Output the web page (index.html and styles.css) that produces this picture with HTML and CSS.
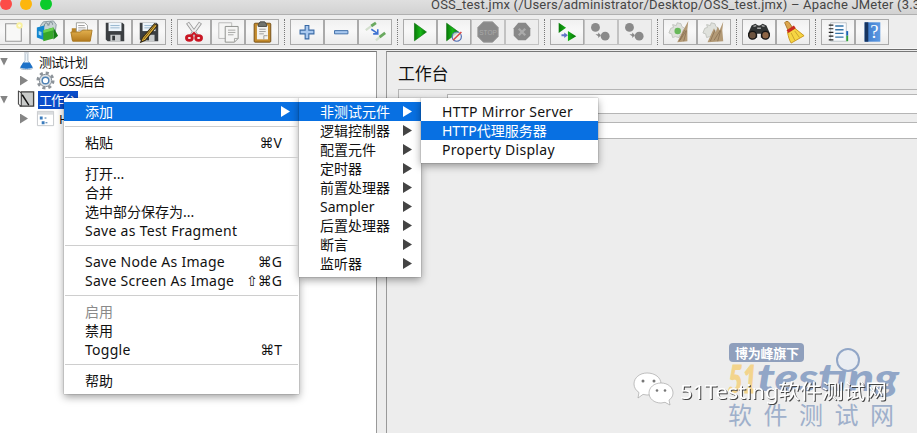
FILE: index.html
```html
<!DOCTYPE html>
<html lang="zh">
<head>
<meta charset="utf-8">
<title>OSS_test.jmx - Apache JMeter</title>
<link rel="stylesheet" href="styles.css">
</head>
<body>
<svg class="defs" width="0" height="0">
  <defs>
    <linearGradient id="green" x2="1"><stop stop-color="#087a08"/><stop offset=".5" stop-color="#18b818"/><stop offset="1" stop-color="#067006"/></linearGradient>
    <linearGradient id="gold" y2="1" x2="0"><stop stop-color="#e2b04e"/><stop offset="1" stop-color="#b57a1c"/></linearGradient>
    <linearGradient id="blue" x2="1"><stop stop-color="#3c78c8"/><stop offset="1" stop-color="#5c9ae4"/></linearGradient>
    <symbol id="floppy" viewBox="0 0 26 26"><path d="M3 3h18l2 2v18H5l-2-2z" fill="#3b3f42"/><path d="M6 3h14v9H6z" fill="#eef5fb"/><path d="M8 6h10M8 8.500h10" stroke="#94b4cc"/><path d="M8 16h11v7H8z" fill="#c9cccd"/><path d="M10 17h3v5h-3z" fill="#34383a"/></symbol>
    <symbol id="broom" viewBox="0 0 26 26"><path d="M3 9l3-1-1-3 4 1 1-3 4 1 1 3 3 2-2 3 1 3-4 1-1 3-4-1-3 1-1-4-3-1z" fill="#dfe1dc" stroke="#c0c2bd"/></symbol>
    <symbol id="nodes" viewBox="0 0 26 26"><circle cx="7" cy="8" r="4.800" fill="#8a8a8a"/><circle cx="17.500" cy="17.500" r="4.800" fill="#8a8a8a"/><path d="M7 15.500h3v-2l3 3-3 3v-2" fill="#888"/></symbol>
  </defs>
</svg>
<div class="window">
  <header class="titlebar">
    <span class="light red"></span><span class="light yellow"></span><span class="light green"></span>
    <span class="title">OSS_test.jmx (/Users/administrator/Desktop/OSS_test.jmx) – Apache JMeter (3.3</span>
  </header>

  <nav class="toolbar">
    <div class="group">
      <button class="tool"><svg viewBox="0 0 26 26"><path d="M5 4h17v19H5z" fill="#f8f8f7" stroke="#999" stroke-width="1.200"/><circle cx="20" cy="6" r="3.500" fill="#f8f0a0"/><circle cx="20" cy="6" r="1.500" fill="#fffde2"/></svg></button>
      <button class="tool"><svg viewBox="0 0 26 26"><path d="M6 6l3-4 11-1 3 4-1 8H8z" fill="#c7d2d4" stroke="#89979e"/><path d="M10 7c0-5 4-5 4-1M15 6c0-5 4-5 4-1" fill="none" stroke="#6c7d86"/><path d="M2 8l8-2v16l-8-3z" fill="#1487cf"/><path d="M4 12l3 1v4l-3-1z" fill="#a5daf3"/><path d="M9 11l11-3v12l-11 3z" fill="#36a729"/><path d="M20 8l5 9-5 4z" fill="#167d16"/><path d="M9 11l11-3v3L9 14z" fill="#6bd24e"/></svg></button>
      <button class="tool"><svg viewBox="0 0 26 26"><path d="M3 9h7l2 2h11v11H3z" fill="#b98428"/><path d="M8 3h9l3 3v11H8z" fill="#fff" stroke="#9a9c98"/><path d="M10 6h7M10 8.500h8M10 11h8" stroke="#999"/><path d="M2 13h10l3-2h10l-2 12H4z" fill="url(#gold)" stroke="#a97924"/></svg></button>
      <button class="tool"><svg><use href="#floppy"/></svg></button>
      <button class="tool"><svg viewBox="0 0 26 26"><use href="#floppy" width="26" height="26"/><path d="M6 19L19 4l3 2L9 22l-5 2z" fill="#e9b637" stroke="#352b17" stroke-width="1.200"/><path d="M7 21L20 5" stroke="#604918"/></svg></button>
    </div>
    <div class="group">
      <button class="tool"><svg viewBox="0 0 26 26"><path d="M6 3l10 14M20 3L10 17" stroke="#999" stroke-width="4"/><path d="M6.500 3.500L16 17M19.500 3.500L10 17" stroke="#eee" stroke-width="2.200"/><ellipse cx="8" cy="19.500" rx="3.200" ry="2.500" fill="none" stroke="#c91724" stroke-width="3"/><ellipse cx="18" cy="19.500" rx="3.200" ry="2.500" fill="none" stroke="#c91724" stroke-width="3"/><path d="M10 17l3-3 3 3" fill="none" stroke="#c91724" stroke-width="2"/></svg></button>
      <button class="tool"><svg viewBox="0 0 26 26"><path d="M3 3h14v17H3z" fill="#f5f5f4" stroke="#b9b9b7"/><path d="M10 7h14v13l-4 4H10z" fill="#f5f5f4" stroke="#8a8b88"/><path d="M24 20h-4v4M13 11h8M13 13.500h8M13 16h6" fill="none" stroke="#a4a5a2"/></svg></button>
      <button class="tool"><svg viewBox="0 0 26 26"><rect x="4.500" y="3.500" width="18" height="20.500" rx="1" fill="#c48b2c" stroke="#704b14"/><path d="M7.500 6h12v15h-12z" fill="#f3f3f1"/><path d="M9 5l2-3h5l2 3v2H9z" fill="#70736e" stroke="#454743"/><path d="M10 10h7M10 12.500h7M10 15h5M19 17h-4v4" fill="none" stroke="#999"/></svg></button>
    </div>
    <div class="group">
      <button class="tool"><svg viewBox="0 0 26 26"><path d="M11 6h4v5h5.500v4H15v5.500h-4V15H5.500v-4H11z" fill="#a8c8ef" stroke="#3869a5" stroke-width="1.200"/></svg></button>
      <button class="tool"><svg viewBox="0 0 26 26"><path d="M6 11.500h14.500V15H6z" fill="#a8c8ef" stroke="#3869a5"/></svg></button>
      <button class="tool"><svg viewBox="0 0 26 26"><path d="M3 11l8-6" stroke="#d3dfcd" stroke-width="2.500"/><path d="M9 6.500l5-3.500" stroke="#6aa95f" stroke-width="3"/><path d="M14 22l7-6" stroke="#d3dfcd" stroke-width="2.500"/><path d="M18 18.500l6-4.500" stroke="#6aa95f" stroke-width="3"/><path d="M9 10l6 4M16 10v5h-5" fill="none" stroke="#3f73d2" stroke-width="1.700"/></svg></button>
    </div>
    <div class="group">
      <button class="tool"><svg viewBox="0 0 26 26"><path d="M7 3.500l13 9.500-13 9.500z" fill="url(#green)" stroke="#0b720b" stroke-width=".7"/></svg></button>
      <button class="tool"><svg viewBox="0 0 26 26"><path d="M5 3.500l13 9.500-13 9.500z" fill="url(#green)" stroke="#0b720b" stroke-width=".7"/><circle cx="16" cy="18" r="5" fill="#eee" fill-opacity=".75" stroke="#5370b5" stroke-width="1.300"/><path d="M12 22l9-9" stroke="#d84b45" stroke-width="1.700"/></svg></button>
      <button class="tool off"><svg viewBox="0 0 26 26"><path d="M8 2h10l6 6v10l-6 6H8l-6-6V8z" fill="#898989" stroke="#999"/><text x="13" y="16" text-anchor="middle" class="stop">STOP</text></svg></button>
      <button class="tool off"><svg viewBox="0 0 26 26"><path d="M9 3h8l5 6v8l-5 5H9l-5-5V9z" fill="#888"/><path d="M9.500 9.500l7 7M16.500 9.500l-7 7" stroke="#aaa" stroke-width="2.500"/></svg></button>
    </div>
    <div class="group">
      <button class="tool"><svg viewBox="0 0 26 26"><path d="M4 3l8 5.500L4 14zM14 12l9 5.500-9 5.500z" fill="url(#green)"/><path d="M7 15.500h3v-2l4 3-4 3v-2H7z" fill="#6174c5"/></svg></button>
      <button class="tool off"><svg><use href="#nodes"/></svg></button>
      <button class="tool off"><svg><use href="#nodes"/></svg></button>
    </div>
    <div class="group">
      <button class="tool"><svg viewBox="0 0 26 26"><use href="#broom" width="26" height="26"/><circle cx="10.500" cy="12" r="3.500" fill="#68b85a"/><path d="M22 1l-1 9v13l-11 1 6-12z" fill="#b39a76"/><path d="M20 11l-7 11M18 11l-6 12M20 12l-3 11" stroke="#80664a" stroke-width=".7"/></svg></button>
      <button class="tool"><svg viewBox="0 0 26 26"><use href="#broom" width="26" height="26"/><path d="M23 2l-1 9 1 12-17 1 5-11 2-4 2 4 2-6 2 4z" fill="#b39a76"/><path d="M20 11l-7 11M14 11l-5 12M20 12l-3 11" stroke="#80664a" stroke-width=".7"/></svg></button>
    </div>
    <div class="group">
      <button class="tool"><svg viewBox="0 0 26 26"><path d="M5 6l4-2 3 2h2l3-2 4 2 4 9-4 6-6-2v-4h-4v4l-6 2-4-6z" fill="#303333"/><circle cx="6" cy="16.500" r="4.200" fill="#6d5440" stroke="#151515" stroke-width="1.500"/><circle cx="20" cy="16.500" r="4.200" fill="#8d6545" stroke="#151515" stroke-width="1.500"/><path d="M7 7l3-1M16 6l3 1M11 9h4" stroke="#aaa" stroke-width="1.500"/></svg></button>
      <button class="tool"><svg viewBox="0 0 26 26"><path d="M4 3c1-2 4-2 5 0l4 6-5 3z" fill="#dca64e" stroke="#a87628"/><path d="M7 13l8-4 10 8-14 8c-2-3-3-7-4-12z" fill="#f6d542" stroke="#c8941c"/><path d="M6 11l8-5 2 3-8 5z" fill="#c92d20"/><path d="M11 14l4 8M15 12l5 7" stroke="#c8a12d"/></svg></button>
    </div>
    <div class="group">
      <button class="tool"><svg viewBox="0 0 26 26"><path d="M5 3h17v20H5z" fill="#fafcff" stroke="#bbc2c7"/><path d="M10 6.500h9M10 10.500h9M10 14.500h9M10 18.500h9" stroke="#3574a9" stroke-width="1.500"/><path d="M3 5.500h5M3 9.500h5M3 13.500h5M3 17.500h5M3 21.500h5" stroke="#222" stroke-width="1.300"/><path d="M22 12h2v5h-2z" fill="#1762b8"/><path d="M22 17h2v6h-2z" fill="#30a238"/></svg></button>
      <button class="tool"><svg viewBox="0 0 26 26"><path d="M5 2.500h17v21H5z" fill="url(#blue)"/><path d="M5 2.500h4v21H5z" fill="#17345f"/><text x="15.500" y="20" text-anchor="middle" class="question">?</text></svg></button>
    </div>
  </nav>

  <main class="content">
    <aside class="tree">
      <div class="node root"><i class="tri down"></i><svg class="ico" viewBox="0 0 18 20"><path d="M7 1h5M8 2v7l-5 8c0 2 13 2 13 0l-5-8V2" fill="#edf4fa" stroke="#a9b7c4"/><path d="M6 11h7l3 5c0 2-13 2-13 0z" fill="#1e72c8"/></svg><span>测试计划</span></div>
      <div class="node child"><i class="tri"></i><svg class="ico" viewBox="0 0 20 20"><circle cx="10" cy="10" r="8" fill="none" stroke="#8d9399" stroke-width="3" stroke-dasharray="3.200 3.080"/><circle cx="10" cy="10" r="6.500" fill="#dce1e5" stroke="#858c93"/><circle cx="10" cy="10" r="3.500" fill="#fff" stroke="#4e82b5" stroke-width="1.500"/></svg><span>OSS后台</span></div>
      <div class="node root"><i class="tri down"></i><svg class="ico" viewBox="0 0 18 20"><path d="M4 2h13v15H3z" fill="#c9cbca" stroke="#3c3c3c" stroke-width="1.400"/><path d="M1 1l3 2v14l-3-2z" fill="#eee" stroke="#333"/><path d="M5 5l7 11" stroke="#111" stroke-width="1.500"/></svg><span class="selected">工作台</span></div>
      <div class="node child"><i class="tri"></i><svg class="ico" viewBox="0 0 20 20"><path d="M1.500 2.500h17v15h-17z" fill="#fff" stroke="#c4c7ca"/><path d="M2 3h16v3H2z" fill="#d9dcdf"/><path d="M4 8h3v3H4zM6 13h3v3H6z" fill="#397bbd"/><path d="M9 9.500h2M10 14.500h2" stroke="#346b9f"/></svg><span>H</span></div>
    </aside>
    <div class="splitter"></div>
    <section class="panel">
      <h1>工作台</h1>
      <div class="form"><div class="field name"></div><div class="field"></div></div>
    </section>
  </main>
</div>

<svg class="watermark" viewBox="0 0 297 103">
  <rect x="109" y="13" width="75" height="19" rx="4" fill="#8f9fbc"/>
  <text x="115" y="28" class="wm-badge" textLength="64">博为峰旗下</text>
  <text x="108" y="63" class="wm-logo gold" textLength="29" lengthAdjust="spacingAndGlyphs">51</text>
  <text x="137" y="61" class="wm-logo steel" textLength="142" lengthAdjust="spacingAndGlyphs">testıng</text>
  <circle cx="228" cy="30" r="11" fill="#eaedf2" stroke="#91a6c7" stroke-width="2"/>
  <text x="108" y="94" class="wm-sub" textLength="166">软件测试网</text>
  <g fill="#fff" stroke="#999" stroke-width=".6">
    <path d="M27 43c8 0 14 4.500 14 11s-6 11-14 11l-4-.6-5 3.600 1-5.500c-3-2-5-5-5-8.500 0-6.500 6-11 13-11z"/>
    <path d="M41 53c7 0 12 4.500 12 10 0 3-1.500 5.500-4 7l1 5-5-2.700-4 .7c-7 0-12-4.500-12-10s5-10 12-10z"/>
  </g>
  <g fill="#777"><circle cx="23" cy="51" r="1.500"/><circle cx="34" cy="51" r="1.500"/><circle cx="37" cy="60.500" r="1.300"/><circle cx="45" cy="60.500" r="1.300"/></g>
  <text x="60" y="69" class="wm-name" textLength="207" lengthAdjust="spacingAndGlyphs">51Testing软件测试网</text>
</svg>

<div class="menus">
  <ul class="menu main">
    <li class="active"><span>添加</span><i class="arrow"></i></li>
    <li class="sep"></li>
    <li><span>粘贴</span><kbd>⌘V</kbd></li>
    <li class="sep"></li>
    <li><span>打开...</span></li>
    <li><span>合并</span></li>
    <li><span>选中部分保存为...</span></li>
    <li><span class="latin">Save as Test Fragment</span></li>
    <li class="sep"></li>
    <li><span class="latin">Save Node As Image</span><kbd>⌘G</kbd></li>
    <li><span class="latin">Save Screen As Image</span><kbd>⇧⌘G</kbd></li>
    <li class="sep"></li>
    <li class="disabled"><span>启用</span></li>
    <li><span>禁用</span></li>
    <li><span class="latin">Toggle</span><kbd>⌘T</kbd></li>
    <li class="sep"></li>
    <li><span>帮助</span></li>
  </ul>
  <ul class="menu sub">
    <li class="active"><span>非测试元件</span><i class="arrow"></i></li>
    <li><span>逻辑控制器</span><i class="arrow"></i></li>
    <li><span>配置元件</span><i class="arrow"></i></li>
    <li><span>定时器</span><i class="arrow"></i></li>
    <li><span>前置处理器</span><i class="arrow"></i></li>
    <li><span>Sampler</span><i class="arrow"></i></li>
    <li><span>后置处理器</span><i class="arrow"></i></li>
    <li><span>断言</span><i class="arrow"></i></li>
    <li><span>监听器</span><i class="arrow"></i></li>
  </ul>
  <ul class="menu leaf">
    <li><span class="latin">HTTP Mirror Server</span></li>
    <li class="active"><span>HTTP代理服务器</span></li>
    <li><span class="latin">Property Display</span></li>
  </ul>
</div>
</body>
</html>
```
FILE: styles.css
```css
* { box-sizing: border-box; }
body {
  margin: 0;
  width: 917px;
  height: 433px;
  overflow: hidden;
  position: relative;
  font: 14px/19px "Noto Sans", "Noto Sans CJK SC", sans-serif;
  color: #111;
}
.defs { position: absolute; }
.window { height: 433px; display: flex; flex-direction: column; background: #ededed; }

.titlebar {
  height: 15px;
  flex: none;
  display: flex;
  align-items: flex-start;
  gap: 8px;
  overflow: hidden;
  background: linear-gradient(#dfdfdf, #d2d2d2);
  border-bottom: 1px solid #b0b0b0;
}
.light { width: 12px; height: 12px; margin-top: -2px; border-radius: 50%; flex: none; }
.red { background: #fc4b48; }
.yellow { background: #fdb60d; }
.green { background: #0acb2b; }
.title {
  margin: -5px 0 0 371px;
  font: 13px/19px Roboto, sans-serif;
  letter-spacing: .2px;
  color: #454545;
  white-space: nowrap;
}

.toolbar { height: 34px; flex: none; display: flex; padding: 4px 0 0; margin-left: -4px; border-bottom: 1px solid #f5f5f5; }
.group { display: flex; height: 26px; }
.group + .group { margin-left: 5px; padding-left: 5px; border-left: 1px dotted #777; }
.tool {
  width: 34px;
  height: 26px;
  padding: 0 4px;
  display: flex;
  align-items: center;
  justify-content: center;
  border: 1px solid #aaa;
  background: linear-gradient(#f1f1f1, #f8f8f8 45%, #ececec);
}
.tool svg { width: 24px; height: 24px; flex: none; }
.off { border-color: #c2c2c2; background: #ededed; }
.stop { font: 7px "Liberation Sans", sans-serif; fill: #aaa; }
.question { font: 20px "Liberation Serif", serif; fill: #fff; }

.content { flex: 1; display: flex; border-top: 1px solid #6a6a6a; }
.tree { width: 377px; margin-top: 1px; background: #fff; border-top: 1px solid #777; border-right: 1px solid #999; font-size: 13px; letter-spacing: -.9px; }
.node { height: 19px; display: flex; align-items: center; white-space: nowrap; }
.node span { line-height: 18px; }
.node.root span { padding: 0 1px; letter-spacing: -1px; }
.node .selected { width: 40px; background: #0a4dcb; color: #fff; }
.tri { width: 8px; height: 10px; background: #858585; clip-path: polygon(0 0, 100% 50%, 0 100%); flex: none; margin-left: 20px; }
.tri.down { margin-left: 0; height: 8px; clip-path: polygon(0 0, 100% 0, 50% 100%); }
.ico { width: 18px; height: 19px; margin: 0 3px 0 9px; flex: none; }
.node.child .ico { width: 19px; margin: 0 4px 0 8px; }

.splitter { width: 9px; }
.panel { flex: 1; margin-top: 1px; padding: 12px 0 0 11px; border-left: 1px solid #999; border-top: 1px solid #777; }
h1 { margin: 0; font-size: 17px; font-weight: 400; line-height: 20px; letter-spacing: -.3px; }
.form { height: 52px; margin-top: 5px; padding: 4px 0 0 48px; border-left: 1px solid #b5b5b5; border-top: 1px solid #b5b5b5; }
.field { height: 17px; background: #fff; border: 1px solid #b5b5b5; border-right: 0; margin-left: -48px; }
.field.name { height: 20px; margin: 0 0 8px; }

.menus { position: absolute; left: 64px; top: 98px; display: flex; align-items: flex-start; }
.menu { list-style: none; margin: 0; padding: 4px 0; background: #fff; box-shadow: 0 3px 8px rgba(0, 0, 0, .38), 0 0 1px rgba(0, 0, 0, .5); }
.menu.main { width: 235px; }
.menu.sub { width: 122px; }
.menu.leaf { width: 177px; }
.menu li { height: 19px; padding: 0 9px 0 21px; display: flex; align-items: center; justify-content: space-between; white-space: nowrap; }
.menu span { line-height: 19px; }
.menu .latin { letter-spacing: .28px; }
.menu .sep { display: block; height: 12px; padding: 0; }
.sep::before { content: ""; display: block; height: 1px; margin: 0 1px; background: #cecece; transform: translateY(5px); }
.menu .active { background: #0870e2; color: #fff; }
.menu .disabled { color: #8a8a8a; }
kbd { font: 14px/19px "Noto Sans", "DejaVu Sans", sans-serif; margin-right: 8px; }
.arrow { width: 9px; height: 11px; background: #444; clip-path: polygon(0 0, 100% 50%, 0 100%); }
.active .arrow { background: #fff; }

.watermark { position: absolute; left: 620px; top: 330px; width: 297px; height: 103px; }
.wm-badge { font: 700 13px "Noto Sans CJK SC", sans-serif; fill: #fff; }
.wm-logo { font: italic 900 37px Lato, sans-serif; }
.gold { fill: #f3d48c; stroke: #f3d48c; }
.steel { fill: #91a6c7; }
.wm-sub { font: 24px "Noto Sans CJK SC", sans-serif; fill: #9fb0cb; }
.wm-name { font: 20px "Noto Sans", "Noto Sans CJK SC", sans-serif; fill: #fff; filter: drop-shadow(1px 1px .3px #444); }
```
